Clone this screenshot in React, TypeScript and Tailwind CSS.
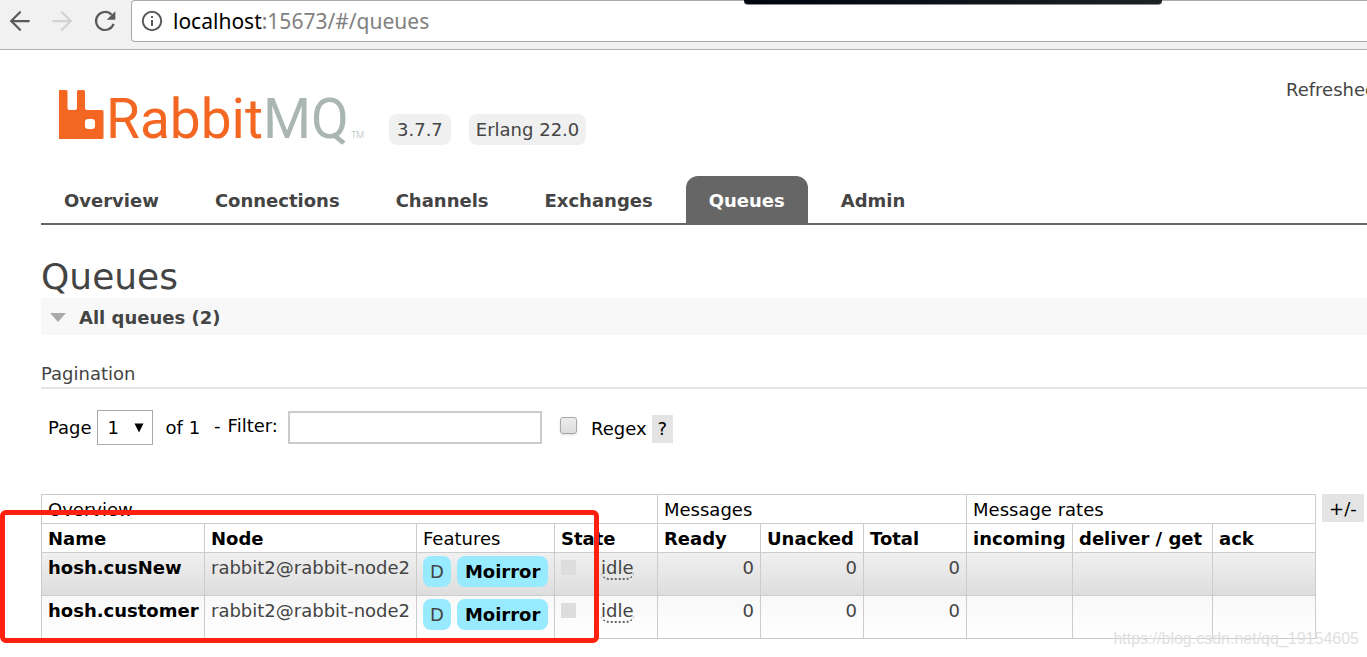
import { ArrowLeft, ArrowRight } from "lucide-react";

type Queue = {
  name: string;
  node: string;
  policy: string;
  state: string;
  counts: number[];
};

const TABS = ["Overview", "Connections", "Channels", "Exchanges", "Queues", "Admin"];

const QUEUES: Queue[] = [
  { name: "hosh.cusNew", node: "rabbit2@rabbit-node2", policy: "Moirror", state: "idle", counts: [0, 0, 0] },
  { name: "hosh.customer", node: "rabbit2@rabbit-node2", policy: "Moirror", state: "idle", counts: [0, 0, 0] },
];

const CELL = "border border-[#ccc] px-[6px] pt-0.5 align-top";

function Toolbar() {
  return (
    <div className="relative flex h-[50px] items-start border-b border-[#b0b0b0] bg-[#f1f1f1]">
      <div className="flex h-[42px] w-[131px] shrink-0 items-center gap-3 pl-[5px] text-[#5a5a5a]">
        <button aria-label="Back">
          <ArrowLeft className="size-[30px]" strokeWidth={1.8} />
        </button>
        <button aria-label="Forward" className="text-[#d2d2d2]">
          <ArrowRight className="size-[30px]" strokeWidth={1.8} />
        </button>
        <button aria-label="Reload">
          <svg viewBox="0 0 24 24" className="ml-1 size-6">
            <path d="M20.6 14.8A9 9 0 1 1 18.6 5.8" fill="none" stroke="currentColor" strokeWidth="2.2" />
            <path d="M22.3 2.2v8.6h-8.6z" fill="currentColor" />
          </svg>
        </button>
      </div>
      <div className="flex h-[42px] flex-1 items-center rounded-l-[4px] border border-r-0 border-[#a9a9a9] bg-white pl-[9px]">
        <svg viewBox="0 0 22 22" className="size-[22px] shrink-0 text-[#5a5a5a]">
          <circle cx="11" cy="11" r="9.2" fill="none" stroke="currentColor" strokeWidth="2" />
          <path d="M10 10h2v6h-2zM10 6h2v2h-2z" fill="currentColor" />
        </svg>
        <p className="ml-2.5 font-['Noto_Sans',sans-serif] text-[21px] leading-none text-[#808080]">
          <span className="text-black">localhost</span>:15673/#/queues
        </p>
      </div>
      <div className="absolute top-0 left-[744px] h-[5px] w-[418px] rounded-b-[4px] border-b border-[#8a8a90] bg-linear-to-r from-[#02040f] to-[#1f2224]" />
    </div>
  );
}

function Logo() {
  return (
    <svg viewBox="0 0 310 60" className="h-[60px] w-[310px] overflow-visible" role="img" aria-label="RabbitMQ">
      <path
        d="M1 5h7q1.5 0 1.5 1.5V23q0 2 2 2h5.5q2 0 2-2V6.5q0-1.5 1.5-1.5h5q1.5 0 1.5 1.5V23q0 2 2 2h15q1.5 0 1.5 1.5V52.5q0 1.5-1.5 1.5H1z"
        fill="#f46722"
      />
      <rect x="27" y="34" width="10" height="10" rx="3" fill="#fff" />
      <text x="48" y="53" fontFamily="Roboto, sans-serif" fontSize="55" fill="#f46722">
        Rabbit<tspan fill="#a9b7b0">MQ</tspan>
      </text>
      <text x="293" y="53" fontFamily="Roboto, sans-serif" fontWeight="300" fontSize="9" fill="#a9b7b0">
        TM
      </text>
    </svg>
  );
}

function Header() {
  return (
    <header>
      <div className="flex h-[126px] items-start justify-between pt-8">
        <div className="flex items-end pt-[3px] pl-[17px]">
          <Logo />
          <span className="ml-[21px] rounded-lg bg-[#f0f0f0] px-2 py-0.5 leading-[27px]">3.7.7</span>
          <span className="ml-[18px] rounded-lg bg-[#f0f0f0] px-[7px] py-0.5 leading-[27px]">Erlang 22.0</span>
        </div>
        <div className="w-[81px] shrink-0 overflow-hidden leading-4">Refreshed</div>
      </div>
      <nav className="flex gap-[10px] border-b-2 border-[#666]">
        {TABS.map((tab) => (
          <a
            key={tab}
            href={"#/" + tab.toLowerCase()}
            className={[
              "rounded-t-xl px-[23px] pt-0.5 leading-[45px] font-bold",
              tab === "Queues" ? "bg-[#666] text-white" : "",
            ].join(" ")}
          >
            {tab}
          </a>
        ))}
      </nav>
    </header>
  );
}

function Filters() {
  return (
    <div className="mt-[21px] flex h-[35px] items-center pl-[7px] text-black">
      <label htmlFor="page">Page</label>
      <div className="relative ml-[5px]">
        <select id="page" className="h-[35px] w-[56px] appearance-none border border-[#a9a9a9] bg-white pl-[10px]">
          <option>1</option>
        </select>
        <svg viewBox="0 0 10 10" className="pointer-events-none absolute top-[13px] right-[9px] size-[10px]">
          <path d="M0.5 0.5h9L5 9.5z" />
        </svg>
      </div>
      <span className="ml-[13px]">of 1</span>
      <label htmlFor="filter" className="ml-[14px] flex gap-[7px] pb-1">
        <span>-</span>
        <span>Filter:</span>
      </label>
      <input id="filter" type="text" className="ml-2.5 h-[33px] w-[254px] border-2 border-[#ccc] bg-white px-1" />
      <input
        id="regex"
        type="checkbox"
        className="mb-1 ml-[18px] size-[17px] appearance-none rounded-[3px] border border-[#a8a8a8] bg-linear-to-b from-[#ececec] to-[#dcdcdc] shadow-sm"
      />
      <div className="ml-[14px] flex items-center gap-[5px] pt-0.5">
        <label htmlFor="regex">Regex</label>
        <button className="h-7 bg-[#e4e4e4] px-1.5">?</button>
      </div>
    </div>
  );
}

function QueueTable() {
  return (
    <div className="relative mt-[49px] flex items-start gap-1.5">
      <table className="w-[1275px] shrink-0 table-fixed border-collapse leading-[26px]">
        <colgroup>
          <col className="w-[163px]" />
          <col className="w-[212px]" />
          <col className="w-[138px]" />
          <col className="w-[103px]" />
          <col className="w-[103px]" />
          <col className="w-[103px]" />
          <col className="w-[103px]" />
          <col className="w-[106px]" />
          <col className="w-[140px]" />
          <col className="w-[103px]" />
        </colgroup>
        <thead className="text-left text-black">
          <tr>
            <th colSpan={4} className={CELL + " font-normal"}>Overview</th>
            <th colSpan={3} className={CELL + " font-normal"}>Messages</th>
            <th colSpan={3} className={CELL + " font-normal"}>Message rates</th>
          </tr>
          <tr>
            {["Name", "Node", "Features", "State", "Ready", "Unacked", "Total", "incoming", "deliver / get", "ack"].map(
              (head) => (
                <th
                  key={head}
                  className={[CELL, "whitespace-nowrap", head === "Features" ? "font-normal" : "font-bold"].join(" ")}
                >
                  {head}
                </th>
              )
            )}
          </tr>
        </thead>
        <tbody>
          {QUEUES.map((queue, i) => (
            <tr
              key={queue.name}
              className={[
                "h-[43px] bg-linear-to-b",
                i % 2 === 0 ? "from-[#f0f0f0] to-[#dddddd]" : "from-[#f8f8f8] to-white",
              ].join(" ")}
            >
              <td className={CELL}>
                <a href={"#/queues/" + queue.name} className="font-bold text-black">
                  {queue.name}
                </a>
              </td>
              <td className={CELL + " whitespace-nowrap"}>{queue.node}</td>
              <td className={CELL}>
                <div className="flex gap-1.5 pt-px">
                  <span className="rounded-lg bg-[#98ebff] px-[7px] leading-[31px]">D</span>
                  <a href="#/policies" className="rounded-lg bg-[#98ebff] px-2 leading-[31px] font-bold text-black">
                    {queue.policy}
                  </a>
                </div>
              </td>
              <td className={CELL}>
                <div className="flex items-start">
                  <span className="mt-[5px] mr-[25px] size-[15px] shrink-0 bg-[#dddddd]" />
                  <span className="mt-[3px] rounded-b-lg border-b-2 border-dotted border-[#666] leading-5">{queue.state}</span>
                </div>
              </td>
              {queue.counts.map((count, n) => (
                <td key={n} className={CELL + " text-right"}>{count}</td>
              ))}
              <td className={CELL} />
              <td className={CELL} />
              <td className={CELL} />
            </tr>
          ))}
        </tbody>
      </table>
      <button className="h-7 shrink-0 bg-[#e4e4e4] px-[7px] pt-0.5 text-black">+/-</button>

      {/* Highlight around the mirrored queues */}
      <div className="pointer-events-none absolute top-4 -left-[41px] h-[133px] w-[599px] rounded-md border-[5px] border-[#ff2010]" />
    </div>
  );
}

export default function App() {
  return (
    <div className="relative min-h-screen overflow-hidden bg-white pb-4 font-['DejaVu_Sans',sans-serif] text-[18px] leading-6 text-[#444]">
      <Toolbar />
      <main className="pl-[41px]">
        <Header />
        <h1 className="pt-[31px] text-[36px] leading-[42px]">Queues</h1>
        <h2 className="flex items-center bg-[#f8f8f8] pt-0.5 pl-[9px] leading-[35px] font-bold">
          <svg viewBox="0 0 16 9" className="mr-[13px] h-[9px] w-4">
            <path d="M0 0h16L8 9z" fill="#aaa" />
          </svg>
          All queues (2)
        </h2>
        <h3 className="mt-[27px] border-b-2 border-[#e4e4e4] pb-px">Pagination</h3>
        <Filters />
        <QueueTable />
      </main>
      <div className="absolute right-2 bottom-2 font-['Liberation_Sans',sans-serif] text-[16px] leading-5 text-[#e0e0e0]">
        https://blog.csdn.net/qq_19154605
      </div>
    </div>
  );
}
